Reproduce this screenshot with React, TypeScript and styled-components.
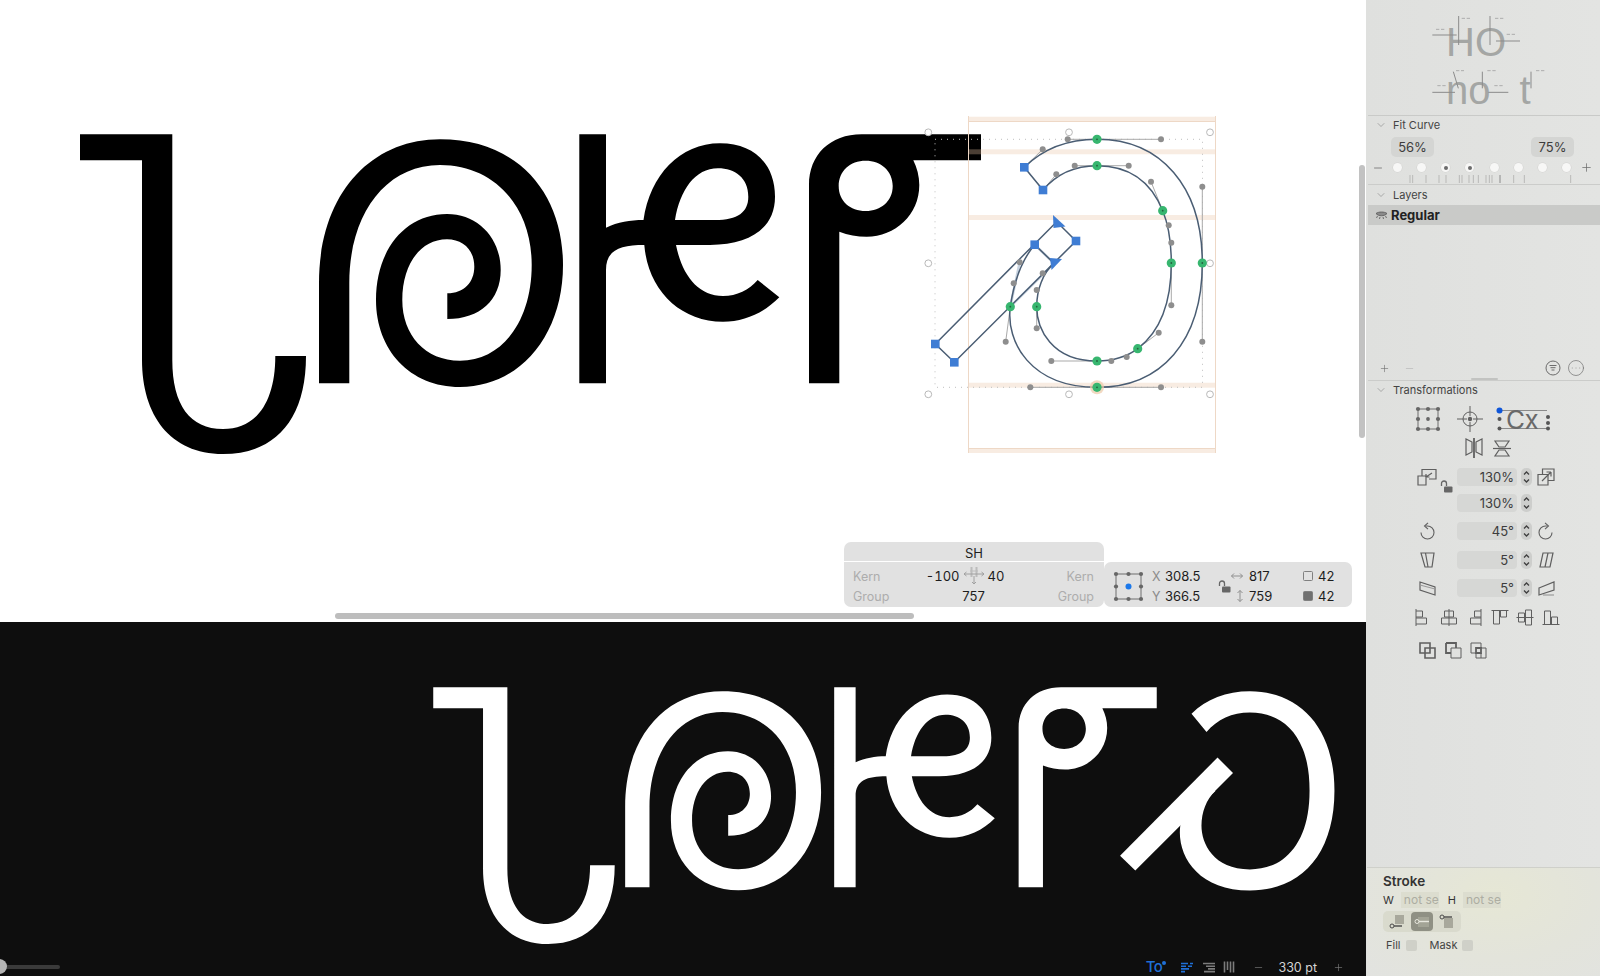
import styled, { createGlobalStyle } from 'styled-components';
import { ChevronDown, CircleEllipsis, Minus, Plus } from 'lucide-react';

const UI_FONT = '"Inter", "Liberation Sans", sans-serif';

const GlobalStyle = createGlobalStyle`
  html, body {
    margin: 0;
    padding: 0;
    height: 100%;
    overflow: hidden;
    background: #e0e1df;
  }
  #root {
    height: 100%;
  }
`;

const Window = styled.div`
  display: flex;
  width: 1600px;
  height: 976px;
  font-family: ${UI_FONT};
  color: #3c3c3c;
`;

const Workspace = styled.main`
  display: flex;
  flex-direction: column;
  flex: 0 0 1366px;
`;

const Editor = styled.section`
  position: relative;
  flex: 0 0 622px;
  background: #fff;
  overflow: hidden;
`;

const Canvas = styled.svg`
  position: absolute;
  top: 0;
  left: 0;
`;

const HScrollThumb = styled.div`
  position: absolute;
  left: 335px;
  top: 613px;
  width: 579px;
  height: 6px;
  border-radius: 3px;
  background: #bdbdbd;
`;

const VScrollThumb = styled.div`
  position: absolute;
  left: 1359px;
  top: 165px;
  width: 6px;
  height: 273px;
  border-radius: 3px;
  background: #c2c2c2;
`;

const InfoBar = styled.div`
  position: absolute;
  right: 14px;
  bottom: 15px;
  display: flex;
  align-items: flex-end;
  font-size: 13px;
  color: #1d1d1d;
`;

const KernStack = styled.div`
  display: flex;
  flex-direction: column;
  gap: 1px;
  width: 260px;
`;

const GlyphName = styled.div`
  height: 19px;
  line-height: 22px;
  text-align: center;
  background: #e1e1e1;
  border-radius: 7px 7px 0 0;
`;

const KernGrid = styled.div`
  display: grid;
  grid-template-columns: 60px 1fr 60px;
  grid-auto-rows: 20px;
  align-items: center;
  padding: 4px 10px 1px 9px;
  background: #e1e1e1;
  border-radius: 0 0 7px 7px;
`;

const Muted = styled.span<{ $right?: boolean }>`
  color: #adadad;
  font-size: 12.5px;
  text-align: ${(p) => (p.$right ? 'right' : 'left')};
`;

const KernValues = styled.div`
  display: grid;
  grid-template-columns: 1fr 22px 1fr;
  align-items: center;
  column-gap: 3px;
  font-variant-numeric: tabular-nums;
`;

const NumRight = styled.span`
  text-align: right;
`;

const Centered = styled.span`
  text-align: center;
`;

const TransformGrid = styled.div`
  display: grid;
  grid-template-columns: 38px 13px 53px 13px 18px 54px 15px 1fr;
  grid-auto-rows: 20px;
  align-items: center;
  width: 248px;
  box-sizing: border-box;
  padding: 4px 0 1px 10px;
  background: #e1e1e1;
  border-radius: 7px;
`;

const AnchorCell = styled.div`
  grid-row: span 2;
  display: flex;
  align-items: center;
`;

const LockCell = styled.div`
  grid-row: span 2;
  display: flex;
  align-items: center;
`;

const AxisLabel = styled.span`
  color: #8b8b8b;
  font-size: 12.5px;
`;

const CellIcon = styled.span<{ $center?: boolean }>`
  display: flex;
  align-items: center;
  justify-content: ${(p) => (p.$center ? 'center' : 'flex-start')};
`;

const Preview = styled.section`
  position: relative;
  flex: 1;
  display: flex;
  flex-direction: column;
  justify-content: flex-end;
  background: #0e0e0e;
  overflow: hidden;
`;

const StatusBar = styled.div`
  position: relative;
  display: flex;
  align-items: center;
  justify-content: space-between;
  height: 18px;
  padding-right: 22px;
`;

const ZoomTrack = styled.div`
  position: relative;
  width: 60px;
  height: 4px;
  border-radius: 2px;
  background: #3a3a3a;
`;

const ZoomKnob = styled.div`
  position: absolute;
  left: -8px;
  top: -6px;
  width: 15px;
  height: 15px;
  border-radius: 50%;
  background: #b4b4b4;
`;

const StatusTools = styled.div`
  display: flex;
  align-items: center;
  color: #7c7c7c;
`;

const ToolSlot = styled.span<{ $ml: number; $active?: boolean }>`
  display: flex;
  align-items: center;
  margin-left: ${(p) => p.$ml}px;
  color: ${(p) => (p.$active ? '#1f6fd6' : '#7c7c7c')};
`;

const TypeTool = styled.span`
  position: relative;
  font-size: 15px;
  font-weight: 500;
  letter-spacing: -0.5px;
  color: #1f6fd6;
  line-height: 18px;
`;

const TypeToolDot = styled.span`
  position: absolute;
  right: -4px;
  top: 3px;
  width: 4px;
  height: 4px;
  border-radius: 50%;
  background: #1f6fd6;
`;

const PointSize = styled.span`
  margin-left: 14px;
  font-size: 12.5px;
  color: #d4d4d4;
  white-space: nowrap;
`;

const Sidebar = styled.aside`
  display: flex;
  flex-direction: column;
  flex: 1;
  padding-left: 2px;
  background: #e0e1df;
  background-image: linear-gradient(90deg, #dfe0de, #e3e4e2);
`;

const SamplePane = styled.div`
  position: relative;
  height: 116px;
  box-sizing: border-box;
  padding: 18px 0 0 78px;
  border-bottom: 1px solid #c9cac8;
`;

const SampleLine = styled.div`
  height: 48px;
  line-height: 48px;
  font-family: "Liberation Sans", sans-serif;
  font-size: 40px;
  color: #a4a6a4;
  white-space: pre;
  word-spacing: 18px;
`;

const SampleMarks = styled.svg`
  position: absolute;
  left: -2px;
  top: 0;
`;

const Section = styled.div<{ $h?: number }>`
  position: relative;
  display: flex;
  flex-direction: column;
  height: ${(p) => (p.$h ? `${p.$h}px` : 'auto')};
  box-sizing: border-box;
  border-bottom: 1px solid #cbccca;
`;

const SectionHead = styled.div<{ $h?: number }>`
  display: flex;
  align-items: center;
  gap: 6px;
  height: ${(p) => p.$h ?? 20}px;
  padding-left: 7px;
  font-size: 11px;
  color: #444;
  svg {
    color: #8a8a8a;
  }
`;

const Percents = styled.div`
  display: flex;
  justify-content: space-between;
  padding: 3px 26px 0 23px;
`;

const PercentPill = styled.span`
  width: 43px;
  height: 20px;
  line-height: 20px;
  text-align: center;
  font-size: 13px;
  color: #3c3c3c;
  background: #d4d5d3;
  border-radius: 5px;
`;

const DotRow = styled.div`
  display: flex;
  align-items: center;
  height: 11px;
  margin-top: 5px;
  padding: 0 7px 0 4px;
  color: #6e6e6e;
`;

const DotTrack = styled.div`
  flex: 1;
  display: flex;
  justify-content: space-between;
  margin: 0 8.5px;
`;

const FitDot = styled.span<{ $on?: boolean }>`
  display: flex;
  align-items: center;
  justify-content: center;
  width: 9px;
  height: 9px;
  border-radius: 50%;
  background: #f7f7f6;
  box-shadow: 0 0 0 0.5px #d2d2d0;
  &::after {
    content: '';
    display: ${(p) => (p.$on ? 'block' : 'none')};
    width: 4px;
    height: 4px;
    border-radius: 50%;
    background: #6b6b6b;
  }
`;

const Ticks = styled.svg`
  display: block;
  margin-top: 2px;
`;

const LayerRow = styled.div`
  display: flex;
  align-items: center;
  gap: 3px;
  height: 20px;
  padding-left: 7px;
  background: #c9cac8;
  font-size: 13px;
  font-weight: 700;
  color: #222;
`;

const LayerFooter = styled.div`
  display: flex;
  align-items: center;
  margin-top: auto;
  height: 22px;
  margin-bottom: 1px;
  padding: 0 15px 0 11px;
  color: #6c6c6c;
`;

const FooterSpacer = styled.div`
  flex: 1;
`;

const FaintMinus = styled.span`
  display: flex;
  margin-left: 14px;
  color: #b2b2b2;
`;

const FooterIcon = styled.span`
  display: flex;
  margin-left: 6px;
  color: #777;
`;

const SplitHandle = styled.div`
  position: absolute;
  left: 103px;
  bottom: 0;
  width: 27px;
  height: 2px;
  border-radius: 1px;
  background: #c2c3c1;
`;

const TransformBody = styled.div`
  display: flex;
  flex-direction: column;
  align-items: flex-start;
`;

const IconRow = styled.div<{ $left: number; $gap: number; $mt: number }>`
  display: flex;
  align-items: center;
  gap: ${(p) => p.$gap}px;
  margin-top: ${(p) => p.$mt}px;
  padding-left: ${(p) => p.$left}px;
  color: #5f5f5f;
`;

const FieldRow = styled.div<{ $mt: number }>`
  position: relative;
  display: flex;
  align-items: center;
  height: 18px;
  margin-top: ${(p) => p.$mt}px;
  color: #5f5f5f;
`;

const FieldIcon = styled.span`
  display: flex;
  justify-content: center;
  width: 28px;
  margin-left: 45px;
  margin-right: 16px;
`;

const EndIcon = styled.span`
  display: flex;
  justify-content: center;
  width: 20px;
  margin-left: 4px;
`;

const NumberField = styled.span`
  width: 60px;
  height: 18px;
  line-height: 18px;
  box-sizing: border-box;
  padding-right: 3px;
  text-align: right;
  font-size: 13px;
  color: #3c3c3c;
  background: #d6d7d5;
  border-radius: 4px;
`;

const Stepper = styled.span`
  display: flex;
  align-items: center;
  justify-content: center;
  width: 11px;
  height: 18px;
  margin-left: 4px;
  background: #cdcecc;
  border-radius: 5px;
  color: #3f3f3f;
`;

const LockBadge = styled.span`
  position: absolute;
  left: 72px;
  top: 12px;
  display: flex;
  color: #555;
`;

const StrokeSection = styled.div`
  margin-top: auto;
  height: 109px;
  box-sizing: border-box;
  margin-left: -1px;
  padding: 5px 0 0 16px;
  border-top: 1px solid #cfd0ca;
  background: radial-gradient(ellipse at 55% 25%, #e6e7d5 0%, #e3e4db 55%, #e2e3e0 100%);
`;

const StrokeTitle = styled.div`
  font-size: 13.5px;
  font-weight: 600;
  line-height: 16px;
  color: #333;
`;

const StrokeSizes = styled.div`
  display: flex;
  align-items: center;
  margin-top: 3px;
  font-size: 11px;
  color: #333;
`;

const NotSet = styled.span<{ $ml: number }>`
  width: 38px;
  height: 16px;
  line-height: 16px;
  box-sizing: border-box;
  padding-left: 3px;
  margin-left: ${(p) => p.$ml}px;
  margin-right: 9px;
  white-space: nowrap;
  font-size: 12px;
  color: #adada2;
  background: #dcddcf;
`;

const Segmented = styled.div`
  display: flex;
  align-items: center;
  width: 78px;
  height: 21px;
  margin-top: 3px;
  padding: 0 3px 0 6px;
  box-sizing: border-box;
  gap: 6px;
  background: #d9dacd;
  border-radius: 5px;
  color: #4a4a4a;
`;

const SegmentIcon = styled.span<{ $on?: boolean }>`
  display: flex;
  align-items: center;
  justify-content: center;
  width: 22px;
  height: 19px;
  border-radius: 4px;
  background: ${(p) => (p.$on ? '#8f9084' : 'transparent')};
  color: ${(p) => (p.$on ? '#e7e7de' : '#4a4a4a')};
`;

const Options = styled.div`
  display: flex;
  align-items: center;
  height: 12px;
  margin-top: 7px;
  padding-left: 3px;
  font-size: 11px;
  color: #444;
`;

const OptionBox = styled.span<{ $mr?: number }>`
  width: 11px;
  height: 11px;
  margin-left: 5px;
  margin-right: ${(p) => p.$mr ?? 0}px;
  background: #cfd0c8;
  border-radius: 2px;
`;

const IconSvg = styled.svg.attrs<{ stroke?: string; strokeWidth?: number | string }>((p) => ({
  stroke: p.stroke ?? 'currentColor',
  strokeWidth: p.strokeWidth ?? 1.2,
}))`
  display: block;
  flex: none;
  fill: none;
  overflow: visible;
`;

/* glyph outlines of the typeface being edited, in page coordinates of the edit view */
const HOOK =
  'M80 134.3H172.3V360C172.3 405 190 429 223 429C258 429 275.3 400 275.3 356H306C306 420 275 454 223 454C170 454 142 415 142 360V160.3H80Z';
const SPIRAL =
  'M319 383.3V283C319 195 370 139.3 440 139.3C520 139.3 563 195 563 265C563 335 520 387 460 387C410 387 376 350 376 300C376 250 405 214 447 214C478 214 500.7 238 500.7 270C500.7 300 480 319 447.3 319V293.3C464 293.3 474.3 282 474.3 266.7C474.3 250 463 239.3 447 239.3C420 239.3 402.3 265 402.3 300C402.3 335 425 360.7 460 360.7C503 360.7 531.7 320 531.7 265C531.7 207 495 165 440 165C385 165 349.3 215 349.3 283V383.3Z';
const STEM_E =
  'M579.3 134.3H606V227.7C618 222 630 220 643.5 220C650 175 680 143.3 720 143.3C755 143.3 775 165 775 196.7C775 228 750 245 710 245H676C682 275 698 296 723 296C737 296 749 290 757.7 280L779.3 297.3C765 312 745 321.7 723 321.7C680 321.7 648 290 644.3 245C620 245 606 250 606 270V383.3H579.3ZM675 220H715C738 220 748.3 212 748.3 196.7C748.3 178 735 168.3 718 168.3C695 168.3 680 190 675 220Z';
const FLAG =
  'M809 383.3V185C809 155 830 134.3 861.7 134.3H981V160.3H913.3C917 168 919.3 176 919.3 185C919.3 215 895 236.7 866.7 236.7C857 236.7 848 235 839.3 231.7V383.3ZM838.7 186C838.7 201 850 211 865.7 211C881 211 892.7 201 892.7 186C892.7 171 881 160.7 865.7 160.7C850 160.7 838.7 171 838.7 186Z';
const BAR = 'M935.3 344L1056.7 221.7L1076 241L954.3 362.3Z';
const BOWL =
  'M1024.3 167.3C1042.7 149.3 1067.7 139.3 1097 139.3C1161 139.3 1202.3 186.7 1202.3 263C1202.3 341.7 1161 387.3 1097 387.3C1030.3 387.3 1005.7 341.7 1010.3 306.7C1013.7 283.3 1019.7 262.3 1034.7 244.7L1054 263.3C1042.7 273.3 1036.7 290 1036.7 306.7C1036.7 328.3 1051.3 361 1097 361C1111.3 361 1126.7 357 1137.7 348.7C1158.7 332.7 1171.3 305.3 1171.3 263C1171.3 242.7 1168.7 225.3 1162.7 210.7C1151 181.7 1128.7 165.7 1097 165.7C1074.7 165.7 1056.3 174.3 1043 190Z';

const corners = [
  [1024.3, 167.3],
  [1043, 190],
  [1034.7, 244.7],
  [1076, 241],
  [935.3, 344],
  [954.3, 362.3],
];

const smooth = [
  [1097, 139.3],
  [1097, 165.7],
  [1162.7, 210.7],
  [1171.3, 263],
  [1202.3, 263],
  [1137.7, 348.7],
  [1097, 361],
  [1036.7, 306.7],
  [1010.3, 306.7],
  [1097, 387.3],
];

const handles = [
  [1067.7, 139.3],
  [1161, 139.3],
  [1042.7, 149.3],
  [1074.7, 165.7],
  [1128.7, 165.7],
  [1056.3, 174.3],
  [1151, 181.7],
  [1168.7, 225.3],
  [1171.3, 242.7],
  [1202.3, 186.7],
  [1202.3, 341.7],
  [1171.3, 305.3],
  [1158.7, 332.7],
  [1126.7, 357],
  [1111.3, 361],
  [1051.3, 361],
  [1030.3, 387.3],
  [1161, 387.3],
  [1036.7, 328.3],
  [1005.7, 341.7],
  [1013.7, 283.3],
  [1036.7, 290],
  [1042.7, 273.3],
  [1019.7, 262.3],
];

const handleLines = [
  [1097, 139.3, 1067.7, 139.3],
  [1097, 139.3, 1161, 139.3],
  [1024.3, 167.3, 1042.7, 149.3],
  [1097, 165.7, 1074.7, 165.7],
  [1097, 165.7, 1128.7, 165.7],
  [1043, 190, 1056.3, 174.3],
  [1162.7, 210.7, 1151, 181.7],
  [1202.3, 263, 1202.3, 186.7],
  [1202.3, 263, 1202.3, 341.7],
  [1171.3, 263, 1171.3, 305.3],
  [1137.7, 348.7, 1158.7, 332.7],
  [1097, 361, 1051.3, 361],
  [1097, 387.3, 1030.3, 387.3],
  [1097, 387.3, 1161, 387.3],
  [1036.7, 306.7, 1036.7, 328.3],
  [1010.3, 306.7, 1005.7, 341.7],
];

const bands = [116.7, 149.3, 215, 382.7, 448];

const SelectionHandles = () => (
  <g fill="#fff" stroke="#b9b9b9" strokeWidth="1">
    {[928.3, 1069, 1210].flatMap((x) =>
      [132.3, 263.3, 394.3]
        .filter((y) => !(x === 1069 && y === 263.3))
        .map((y) => <circle key={`${x}-${y}`} cx={x} cy={y} r="3.4" />),
    )}
  </g>
);

const EditCanvas = () => (
  <Canvas width="1366" height="622" viewBox="0 0 1366 622">
    <g fill="#000">
      <path d={HOOK} />
      <path d={SPIRAL} />
      <path d={STEM_E} fillRule="evenodd" />
      <path d={FLAG} fillRule="evenodd" />
    </g>
    {bands.map((y) => (
      <rect key={y} x="968.5" y={y} width="247" height="5" fill="#eac5a6" fillOpacity="0.32" />
    ))}
    <g stroke="#eed8c6" strokeWidth="1">
      <line x1="968.5" y1="116" x2="968.5" y2="453" />
      <line x1="1215.5" y1="116" x2="1215.5" y2="453" />
      <line x1="968.5" y1="121.5" x2="1215.5" y2="121.5" />
      <line x1="968.5" y1="448.5" x2="1215.5" y2="448.5" />
    </g>
    <rect
      x="935"
      y="139.3"
      width="267.5"
      height="248"
      fill="none"
      stroke="#bfbfbf"
      strokeWidth="1"
      strokeDasharray="1 5"
    />
    <SelectionHandles />
    <g stroke="#c6d2e0" strokeWidth="2.5">
      <line x1="1034.7" y1="244.7" x2="1054" y2="263.3" />
      <line x1="1010.3" y1="306.7" x2="1054" y2="263.3" />
      <line x1="1010.3" y1="306.7" x2="1019.7" y2="262.3" />
    </g>
    <g stroke="#a9a9a9" strokeWidth="1">
      {handleLines.map(([x1, y1, x2, y2]) => (
        <line key={`${x1}${y1}${x2}${y2}`} x1={x1} y1={y1} x2={x2} y2={y2} />
      ))}
    </g>
    <g fill="none" stroke="#4a5d73" strokeWidth="1.5">
      <path d={BOWL} />
      <path d={BAR} />
    </g>
    <g fill="#8e8e8e">
      {handles.map(([x, y]) => (
        <circle key={`${x}-${y}`} cx={x} cy={y} r="3" />
      ))}
    </g>
    <circle cx="1097" cy="387.3" r="7" fill="#edc9a8" fillOpacity="0.7" />
    <g fill="#37b66f">
      {smooth.map(([x, y]) => (
        <circle key={`${x}-${y}`} cx={x} cy={y} r="4.6" />
      ))}
    </g>
    <g fill="#24603f">
      {smooth.map(([x, y]) => (
        <circle key={`${x}-${y}`} cx={x} cy={y} r="0.9" />
      ))}
    </g>
    <g fill="#3f7dd4">
      {corners.map(([x, y]) => (
        <rect key={`${x}-${y}`} x={x - 4.3} y={y - 4.3} width="8.6" height="8.6" />
      ))}
      <path d="M1053 215L1065.5 226.5L1053.5 228Z" />
      <path d="M1050 258L1062 259L1051.5 270Z" />
    </g>
  </Canvas>
);

const PreviewCanvas = () => (
  <Canvas width="1366" height="354" viewBox="0 0 1366 354">
    <g fill="#fff" transform="translate(369 -42.5) scale(0.803)">
      <path d={HOOK} />
      <path d={SPIRAL} />
      <path d={STEM_E} fillRule="evenodd" />
      <path d={FLAG} fillRule="evenodd" />
      <path d={BOWL} />
      <path d={BAR} />
    </g>
  </Canvas>
);

const Bars = ({ right }: { right?: boolean }) => (
  <IconSvg width="14" height="11" viewBox="0 0 14 11" strokeWidth="1.6">
    {right ? (
      <path d="M1 1.5H13M4 4.2H13M6 6.9H13M2 9.6H13" />
    ) : (
      <path d="M1 1.5H8M10 1.5H13M1 4.2H6M8 4.2H12M1 6.9H9M1 9.6H5" />
    )}
  </IconSvg>
);

const Columns = () => (
  <IconSvg width="12" height="12" viewBox="0 0 12 12" strokeWidth="1.6">
    <path d="M1.5 0.5V11.5M4.5 0.5V9M7.5 0.5V11.5M10.5 0.5V11.5" />
  </IconSvg>
);

const AnchorGrid = ({ side, selected }: { side: number; selected?: boolean }) => {
  const a = 2;
  const m = side / 2;
  const b = side - 2;
  const pts = [a, m, b];
  return (
    <IconSvg width={side} height={side} viewBox={`0 0 ${side} ${side}`} stroke="#6f6f6f" strokeWidth="1">
      <rect x={a} y={a} width={b - a} height={b - a} />
      {pts.flatMap((x) =>
        pts
          .filter((y) => !(x === m && y === m))
          .map((y) => <circle key={`${x}-${y}`} cx={x} cy={y} r="2.1" fill="#666" stroke="none" />),
      )}
      <circle cx={m} cy={m} r={selected ? 3 : 1.9} fill={selected ? '#1b78ea' : '#666'} stroke="none" />
    </IconSvg>
  );
};

const KernIcon = () => (
  <IconSvg width="22" height="20" viewBox="0 0 22 20" stroke="#a0a0a0" strokeWidth="1">
    <path d="M8.5 1V11M13.5 1V11" strokeWidth="2" stroke="#bcbcbc" />
    <path d="M7 5H15" stroke="#bcbcbc" />
    <path d="M1 8H21M1 8L3.5 6M1 8L3.5 10M21 8L18.5 6M21 8L18.5 10" />
    <path d="M11 10V18M9 16L11 18L13 16" />
  </IconSvg>
);

const LockOpen = () => (
  <IconSvg width="13" height="13" viewBox="0 0 13 13" stroke="#666" strokeWidth="1.3">
    <path d="M1.5 6V3.5C1.5 2 2.5 1 4 1C5.5 1 6.5 2 6.5 3.5V6" />
    <rect x="4" y="6.5" width="8.5" height="6" fill="#666" stroke="none" rx="1" />
  </IconSvg>
);

const HArrow = () => (
  <IconSvg width="12" height="8" viewBox="0 0 12 8" stroke="#8f8f8f" strokeWidth="1">
    <path d="M0.5 4H11.5M0.5 4L3 1.5M0.5 4L3 6.5M11.5 4L9 1.5M11.5 4L9 6.5" />
  </IconSvg>
);

const VArrow = () => (
  <IconSvg width="8" height="12" viewBox="0 0 8 12" stroke="#8f8f8f" strokeWidth="1">
    <path d="M4 0.5V11.5M4 0.5L1.5 3M4 0.5L6.5 3M4 11.5L1.5 9M4 11.5L6.5 9" />
  </IconSvg>
);

const CornerSquare = ({ filled }: { filled?: boolean }) => (
  <IconSvg width="10" height="10" viewBox="0 0 10 10" stroke="#808080" strokeWidth="1">
    <rect x="0.5" y="0.5" width="9" height="9" rx="1" fill={filled ? '#707070' : 'none'} />
  </IconSvg>
);

const EyeClosed = () => (
  <IconSvg width="13" height="9" viewBox="0 0 13 9" stroke="#555" strokeWidth="0.8">
    <path d="M1 2.5C3.5 0.5 9.5 0.5 12 2.5C9.5 5.5 3.5 5.5 1 2.5Z" fill="#8a8a8a" />
    <path d="M2.5 5L1.5 7M5 6L4.5 8M8 6L8.5 8M10.5 5L11.5 7" />
  </IconSvg>
);

const FilterCircle = () => (
  <IconSvg width="16" height="16" viewBox="0 0 16 16" strokeWidth="1">
    <circle cx="8" cy="8" r="7" />
    <path d="M4.5 5.5H11.5M5.5 7.7H10.5M6.5 10H9.5" />
  </IconSvg>
);

const Crosshair = () => (
  <IconSvg width="26" height="26" viewBox="0 0 26 26" strokeWidth="1">
    <circle cx="13" cy="13" r="7" />
    <circle cx="13" cy="13" r="2.2" fill="currentColor" stroke="none" />
    <path d="M0 13H10M16 13H26M13 0V10M13 16V26" />
  </IconSvg>
);

const OriginCx = () => (
  <IconSvg width="54" height="32" viewBox="3 -3 54 32" strokeWidth="1">
    <path d="M2 4.5H50M2 22.5H50" stroke="#8a8a8a" />
    <text
      x="9"
      y="22.5"
      fontFamily={UI_FONT}
      fontSize="26"
      fill="#696969"
      stroke="none"
      letterSpacing="-0.5"
    >
      Cx
    </text>
    <g fill="#555" stroke="none">
      <circle cx="2.5" cy="13" r="2" />
      <circle cx="2.5" cy="22.5" r="2" />
      <circle cx="51" cy="11" r="2" />
      <circle cx="51" cy="17" r="2" />
      <circle cx="51" cy="22.5" r="2" />
    </g>
    <circle cx="2.5" cy="4.5" r="3" fill="#0f56d9" stroke="none" />
  </IconSvg>
);

const MirrorH = () => (
  <IconSvg width="18" height="20" viewBox="0 0 18 20">
    <path d="M7 4L1 1V17L7 14ZM11 4L17 1V17L11 14Z" />
    <path d="M9 0V20" strokeWidth="1.8" />
  </IconSvg>
);

const MirrorV = () => (
  <IconSvg width="18" height="17" viewBox="0 0 18 17">
    <path d="M2 1H16L12 7H6ZM6 10H12L16 16H2Z" />
    <path d="M0 8.5H18" />
  </IconSvg>
);

const ScaleDown = () => (
  <IconSvg width="20" height="18" viewBox="0 0 20 18">
    <path d="M5 8V1.5H19V11H12" />
    <path d="M1 8H9V17H1Z" />
    <path d="M15 5L9 9M9 9H12.5M9 9V6" />
  </IconSvg>
);

const ScaleUp = () => (
  <IconSvg width="18" height="18" viewBox="0 0 18 18">
    <path d="M5.5 6V1H17V12.5H11" />
    <path d="M1 6.5H11V17H1Z" />
    <path d="M5 13L14 4M14 4H9.5M14 4V8.5" />
  </IconSvg>
);

const RotateLeft = () => (
  <IconSvg width="16" height="18" viewBox="0 0 16 18" strokeWidth="1.1">
    <path d="M6.5 4H8.5A6.5 6.5 0 1 1 2 10.5" />
    <path d="M9 0.8L5.5 4L9 7.2" />
  </IconSvg>
);

const RotateRight = () => (
  <IconSvg width="16" height="18" viewBox="0 0 16 18" strokeWidth="1.1">
    <path d="M9.5 4H7.5A6.5 6.5 0 1 0 14 10.5" />
    <path d="M7 0.8L10.5 4L7 7.2" />
  </IconSvg>
);

const SkewInLeft = () => (
  <IconSvg width="15" height="16" viewBox="0 0 15 16">
    <path d="M1 1H14L12 15H5ZM5.5 1L8 15" />
  </IconSvg>
);

const SkewInRight = () => (
  <IconSvg width="15" height="16" viewBox="0 0 15 16">
    <path d="M4 1H14L11 15H1ZM9 1L6 15" />
  </IconSvg>
);

const SkewUpLeft = () => (
  <IconSvg width="17" height="15" viewBox="0 0 17 15">
    <path d="M1 1L16 6V14L1 9Z" />
    <path d="M1 4L16 8" stroke="#9a9a9a" />
  </IconSvg>
);

const SkewUpRight = () => (
  <IconSvg width="17" height="15" viewBox="0 0 17 15">
    <path d="M1 7L16 1V9L1 14Z" />
    <path d="M5 14H16" stroke="#9a9a9a" />
  </IconSvg>
);

const Chevrons = () => (
  <IconSvg width="7" height="14" viewBox="0 0 7 14" strokeWidth="1.3">
    <path d="M1 4.5L3.5 2L6 4.5M1 9.5L3.5 12L6 9.5" />
  </IconSvg>
);

const alignShapes = [
  'M1.5 0V17M1.5 2H8V8H1.5M1.5 9H12V15H1.5',
  'M8.5 0V17M4 2H13V8H4ZM1 9H16V15H1Z',
  'M15.5 0V17M15.5 2H9V8H15.5M15.5 9H5V15H15.5',
  'M0 1.5H17M2 1.5V15H8V1.5M9 1.5V8H15V1.5',
  'M0 8.5H17M2 4H8V13H2ZM9 1H15V16H9Z',
  'M0 15.5H17M2 15.5V2H8V15.5M9 15.5V8H15V15.5',
];

const BooleanIcon = ({ kind }: { kind: number }) => (
  <IconSvg width="17" height="17" viewBox="0 0 17 17" strokeWidth="1.4">
    {kind === 0 && <path d="M1 1H11V6H16V16H6V11H1ZM6 6H11V11H6Z" strokeWidth="1.6" />}
    {kind === 1 && (
      <>
        <path d="M1 1H11V6M6 11H1V1" strokeWidth="1.8" />
        <path d="M6 6H16V16H6Z" strokeWidth="1" />
      </>
    )}
    {kind === 2 && (
      <>
        <path d="M1 1H11V6M6 11H1V1M11 11V16M6 11V16H16V6H11" strokeWidth="1" />
        <path d="M6 6H11V11H6Z" strokeWidth="1.8" />
      </>
    )}
  </IconSvg>
);

const StrokeAlign = ({ kind }: { kind: number }) => (
  <IconSvg width="16" height="15" viewBox="0 0 16 15" strokeWidth="1">
    {kind === 0 && (
      <>
        <rect x="6" y="1" width="9" height="9" fill="#a8a89c" stroke="none" />
        <circle cx="3" cy="12" r="2" />
        <path d="M5 12H13" strokeWidth="1.4" />
      </>
    )}
    {kind === 1 && (
      <>
        <rect x="4" y="3" width="11" height="10" fill="#a3a496" stroke="none" />
        <circle cx="3" cy="7.5" r="2" />
        <path d="M5 7.5H15" strokeWidth="1.4" />
      </>
    )}
    {kind === 2 && (
      <>
        <rect x="5" y="4" width="9" height="10" fill="#a8a89c" stroke="none" />
        <circle cx="3" cy="3" r="2" />
        <path d="M5 3H13" strokeWidth="1.4" />
      </>
    )}
  </IconSvg>
);

const tickXs = [150, 158, 198, 237, 258, 298, 306, 327, 340, 355, 378, 388, 396, 420, 461, 493, 632];

const FitTicks = () => (
  <Ticks width="232" height="9" viewBox="0 0 232 9">
    {tickXs.map((zx) => {
      const x = zx / 3 - 6 - 2;
      return <line key={zx} x1={x} y1="0" x2={x} y2="8" stroke={zx === 420 ? '#8a8a8a' : '#b9b9b7'} />;
    })}
  </Ticks>
);

const SampleOverlay = () => (
  <SampleMarks width="234" height="116" viewBox="18 0 702 348">
    <g fill="none" stroke="#8b8b8b" strokeWidth="3">
      <path d="M217 105H290M296 48V135M390 48V135M408 123H480" />
      <path d="M217 277H285M280 215L295 265M367 215V265M385 277H445M513 215V265" />
    </g>
    <g fill="none" stroke="#adadad" strokeWidth="3" strokeDasharray="10 5">
      <path d="M228 88H255M305 55H330M405 55H430M440 103H470" />
      <path d="M232 257H258M288 212H312M382 212H408M403 257H430M528 212H555" />
    </g>
  </SampleMarks>
);

const fitDots = [false, false, true, true, false, false, false, false];

const transformRows = [
  { mt: 10, value: '130%', left: <ScaleDown />, right: <ScaleUp /> },
  { mt: 8, value: '130%' },
  { mt: 10, value: '45°', left: <RotateLeft />, right: <RotateRight /> },
  { mt: 11, value: '5°', left: <SkewInLeft />, right: <SkewInRight /> },
  { mt: 10, value: '5°', left: <SkewUpLeft />, right: <SkewUpRight /> },
];

const App = () => {
  return (
    <>
      <GlobalStyle />
      <Window>
        <Workspace>
          <Editor>
            <EditCanvas />
            <HScrollThumb />
            <VScrollThumb />
            <InfoBar>
              <KernStack>
                <GlyphName>SH</GlyphName>
                <KernGrid>
                  <Muted>Kern</Muted>
                  <KernValues>
                    <NumRight>-100</NumRight>
                    <KernIcon />
                    <span>40</span>
                  </KernValues>
                  <Muted $right>Kern</Muted>
                  <Muted>Group</Muted>
                  <Centered>757</Centered>
                  <Muted $right>Group</Muted>
                </KernGrid>
              </KernStack>
              <TransformGrid>
                <AnchorCell>
                  <AnchorGrid side={29} selected />
                </AnchorCell>
                <AxisLabel>X</AxisLabel>
                <span>308.5</span>
                <LockCell>
                  <LockOpen />
                </LockCell>
                <CellIcon>
                  <HArrow />
                </CellIcon>
                <span>817</span>
                <CellIcon>
                  <CornerSquare />
                </CellIcon>
                <span>42</span>
                <AxisLabel>Y</AxisLabel>
                <span>366.5</span>
                <CellIcon $center>
                  <VArrow />
                </CellIcon>
                <span>759</span>
                <CellIcon>
                  <CornerSquare filled />
                </CellIcon>
                <span>42</span>
              </TransformGrid>
            </InfoBar>
          </Editor>
          <Preview>
            <PreviewCanvas />
            <StatusBar>
              <ZoomTrack>
                <ZoomKnob />
              </ZoomTrack>
              <StatusTools>
                <TypeTool>
                  To
                  <TypeToolDot />
                </TypeTool>
                <ToolSlot $ml={18} $active>
                  <Bars />
                </ToolSlot>
                <ToolSlot $ml={8}>
                  <Bars right />
                </ToolSlot>
                <ToolSlot $ml={7}>
                  <Columns />
                </ToolSlot>
                <ToolSlot $ml={18}>
                  <Minus size={11} strokeWidth={1.4} />
                </ToolSlot>
                <PointSize>330 pt</PointSize>
                <ToolSlot $ml={16}>
                  <Plus size={11} strokeWidth={1.4} />
                </ToolSlot>
              </StatusTools>
            </StatusBar>
          </Preview>
        </Workspace>

        <Sidebar>
          <SamplePane>
            <SampleLine>HO</SampleLine>
            <SampleLine>no t</SampleLine>
            <SampleOverlay />
          </SamplePane>

          <Section $h={69}>
            <SectionHead $h={18}>
              <ChevronDown size={12} strokeWidth={1.3} />
              Fit Curve
            </SectionHead>
            <Percents>
              <PercentPill>56%</PercentPill>
              <PercentPill>75%</PercentPill>
            </Percents>
            <DotRow>
              <Minus size={12} strokeWidth={1.6} />
              <DotTrack>
                {fitDots.map((on, i) => (
                  <FitDot key={i} $on={on} />
                ))}
              </DotTrack>
              <Plus size={13} strokeWidth={1.4} />
            </DotRow>
            <FitTicks />
          </Section>

          <Section $h={196}>
            <SectionHead>
              <ChevronDown size={12} strokeWidth={1.3} />
              Layers
            </SectionHead>
            <LayerRow>
              <EyeClosed />
              Regular
            </LayerRow>
            <LayerFooter>
              <Plus size={11} strokeWidth={1.3} />
              <FaintMinus>
                <Minus size={11} strokeWidth={1.3} />
              </FaintMinus>
              <FooterSpacer />
              <FilterCircle />
              <FooterIcon>
                <CircleEllipsis size={18} strokeWidth={1} />
              </FooterIcon>
            </LayerFooter>
            <SplitHandle />
          </Section>

          <SectionHead $h={18}>
            <ChevronDown size={12} strokeWidth={1.3} />
            Transformations
          </SectionHead>
          <TransformBody>
            <IconRow $left={48} $gap={17} $mt={4}>
              <AnchorGrid side={24} />
              <Crosshair />
              <OriginCx />
            </IconRow>
            <IconRow $left={97} $gap={10} $mt={3}>
              <MirrorH />
              <MirrorV />
            </IconRow>
            {transformRows.map((row, i) => (
              <FieldRow key={i} $mt={row.mt}>
                <FieldIcon>{row.left}</FieldIcon>
                <NumberField>{row.value}</NumberField>
                <Stepper>
                  <Chevrons />
                </Stepper>
                <EndIcon>{row.right}</EndIcon>
                {i === 0 && (
                  <LockBadge>
                    <LockOpen />
                  </LockBadge>
                )}
              </FieldRow>
            ))}
            <IconRow $left={46} $gap={7.5} $mt={12}>
              {alignShapes.map((d) => (
                <IconSvg key={d} width="18" height="17" viewBox="0 0 17 17" strokeWidth="1">
                  <path d={d} />
                </IconSvg>
              ))}
            </IconRow>
            <IconRow $left={51} $gap={8.5} $mt={16}>
              <BooleanIcon kind={0} />
              <BooleanIcon kind={1} />
              <BooleanIcon kind={2} />
            </IconRow>
          </TransformBody>

          <StrokeSection>
            <StrokeTitle>Stroke</StrokeTitle>
            <StrokeSizes>
              W
              <NotSet $ml={7}>not se</NotSet>
              H
              <NotSet $ml={7}>not se</NotSet>
            </StrokeSizes>
            <Segmented>
              <StrokeAlign kind={0} />
              <SegmentIcon $on>
                <StrokeAlign kind={1} />
              </SegmentIcon>
              <StrokeAlign kind={2} />
            </Segmented>
            <Options>
              Fill
              <OptionBox $mr={13} />
              Mask
              <OptionBox />
            </Options>
          </StrokeSection>
        </Sidebar>
      </Window>
    </>
  );
};

export default App;
